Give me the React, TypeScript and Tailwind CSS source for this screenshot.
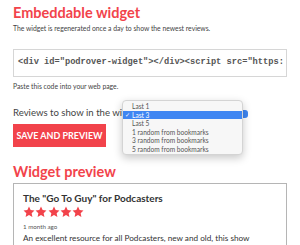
const options = [
  "Last 1",
  "Last 3",
  "Last 5",
  "1 random from bookmarks",
  "3 random from bookmarks",
  "5 random from bookmarks",
];

function Star() {
  return (
    <svg width="12" height="12" viewBox="0 0 24 24" className="shrink-0">
      <path
        d="M12 1.2l3.3 7 7.6.9-5.6 5.2 1.5 7.6L12 18.1l-6.8 3.8 1.5-7.6L1.1 9.1l7.6-.9z"
        fill="#f2434b"
      />
    </svg>
  );
}

export default function App() {
  return (
    <div
      className="w-[300px] h-[245px] overflow-hidden bg-white px-[13px] text-[#3a3a3a]"
      style={{ fontFamily: "Lato, 'Open Sans', sans-serif" }}
    >
      <h1 className="mt-[4px] text-[14.5px] leading-[18px] font-bold text-[#f2434b]">
        Embeddable widget
      </h1>
      <p className="mt-[1px] text-[6.8px] leading-[10px] text-[#444]">
        The widget is regenerated once a day to show the newest reviews.
      </p>

      <div className="mt-[16px] h-[28px] w-[274px] border border-[#d6d6d6] flex items-center pl-[4px] overflow-hidden">
        <span
          className="whitespace-nowrap text-[8.7px] font-bold text-[#555]"
          style={{ fontFamily: "'Liberation Mono', monospace" }}
        >
          {'<div id="podrover-widget"></div><script src="https:'}
        </span>
      </div>

      <p className="mt-[4px] text-[6.8px] leading-[10px] text-[#444]">
        Paste this code into your web page.
      </p>

      <div className="relative mt-[16px] h-[12px] flex items-center">
        <span className="text-[9.6px] leading-[12px] text-[#444] whitespace-nowrap">
          Reviews to show in the widget
        </span>
        <div className="absolute left-[226px] top-[3px] h-[8px] w-[9px] rounded-[3px] bg-[#3f86f2]" />
        <div className="absolute left-[109px] top-[-7px] w-[121px] h-[55px] rounded-[4px] border border-[#d4d4d4] bg-[#f7f7f7] shadow-[0_3px_8px_rgba(0,0,0,0.22)] pt-[1px]">
          {options.map((o) => (
            <div
              key={o}
              className={
                o === "Last 3"
                  ? "h-[8.5px] flex items-center bg-[#3f86f2] text-white text-[6.6px] leading-[8px]"
                  : "h-[8.5px] flex items-center text-[#555] text-[6.6px] leading-[8px]"
              }
            >
              <span className="w-[9px] shrink-0 pl-[1.5px] text-[6px]">
                {o === "Last 3" ? "✓" : ""}
              </span>
              <span className="whitespace-nowrap">{o}</span>
            </div>
          ))}
        </div>
      </div>

      <button className="mt-[5px] h-[23px] w-[93px] bg-[#f2434b] text-white text-[9px] font-bold whitespace-nowrap flex items-center justify-center">
        SAVE AND PREVIEW
      </button>

      <h2 className="mt-[16px] text-[14.5px] leading-[18px] font-bold text-[#f2434b]">
        Widget preview
      </h2>

      <div className="mt-[2px] w-[274px] h-[80px] border border-[#b5b5b5] pl-[9px] pt-[8px]">
        <div className="text-[10px] leading-[12px] font-bold text-[#333]">
          The "Go To Guy" for Podcasters
        </div>
        <div className="mt-[2px] flex gap-[0.3px]">
          <Star />
          <Star />
          <Star />
          <Star />
          <Star />
        </div>
        <div className="mt-[5px] text-[6.2px] leading-[8px] text-[#555]">
          1 month ago
        </div>
        <div className="mt-[2px] text-[8.2px] leading-[11px] text-[#333] whitespace-nowrap">
          An excellent resource for all Podcasters, new and old, this show
        </div>
      </div>
    </div>
  );
}
